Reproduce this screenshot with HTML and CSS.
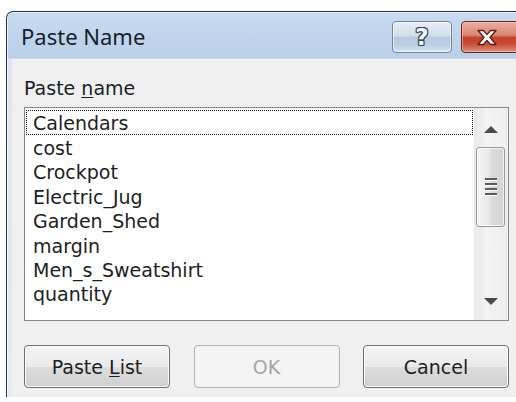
FILE: index.html
```html
<!DOCTYPE html>
<html lang="en">
<head>
<meta charset="utf-8">
<title>Paste Name</title>
<link rel="stylesheet" href="styles.css">
</head>
<body>
<div class="window">
  <div class="titlebar">
    <span class="title">Paste Name</span>
    <div class="caption-buttons">
      <div class="cap help"><span class="help-glyph">?</span></div>
      <div class="cap close">
        <svg class="close-glyph" width="22" height="17" viewBox="0 0 22 17">
          <path d="M2 1.5 H7.5 L11 5.6 L14.5 1.5 H20 L14 8.5 L20 15.5 H14.5 L11 11.4 L7.5 15.5 H2 L8 8.5 Z" fill="#ffffff" stroke="#5e1d14" stroke-width="1.3" stroke-linejoin="round"/>
        </svg>
      </div>
    </div>
  </div>
  <div class="client">
    <div class="field-label">Paste <u>n</u>ame</div>
    <div class="listbox">
      <ul class="items">
        <li class="item focused">Calendars</li>
        <li class="item">cost</li>
        <li class="item">Crockpot</li>
        <li class="item">Electric_Jug</li>
        <li class="item">Garden_Shed</li>
        <li class="item">margin</li>
        <li class="item">Men_s_Sweatshirt</li>
        <li class="item">quantity</li>
      </ul>
      <div class="scrollbar">
        <div class="sb-btn sb-up">
          <svg width="14" height="7" viewBox="0 0 14 7"><path d="M0 7 L7 0 L14 7 Z" fill="#4a4a4a"/></svg>
        </div>
        <div class="sb-track">
          <div class="thumb">
            <span class="grip"></span><span class="grip"></span><span class="grip"></span><span class="grip"></span>
          </div>
        </div>
        <div class="sb-btn sb-down">
          <svg width="14" height="7" viewBox="0 0 14 7"><path d="M0 0 L14 0 L7 7 Z" fill="#4a4a4a"/></svg>
        </div>
      </div>
    </div>
    <div class="buttons">
      <div class="btn"><span>Paste <u>L</u>ist</span></div>
      <div class="btn disabled"><span>OK</span></div>
      <div class="btn"><span>Cancel</span></div>
    </div>
  </div>
</div>
</body>
</html>
```
FILE: styles.css
```css
html, body {
  margin: 0;
  padding: 0;
}

body {
  width: 516px;
  height: 402px;
  overflow: hidden;
  background: #ffffff;
  font-family: "DejaVu Sans", Tahoma, sans-serif;
}

/* dialog frame */
.window {
  margin: 11px 0 0 6px;
  width: 538px;
  border: 1px solid #2f343c;
  border-bottom: none;
  border-radius: 7px 7px 0 0;
  background: linear-gradient(to bottom, #c8dbef 0, #b9d0e9 46px, #dbe6f2 47px, #e4ecf5 100%);
  box-shadow: inset 0 1px 0 rgba(255, 255, 255, 0.6), inset 1px 0 0 rgba(255, 255, 255, 0.6);
}

.titlebar {
  height: 47px;
  display: flex;
  align-items: flex-start;
  padding: 0 14px 0 14px;
}

.title {
  font-family: "Noto Sans", "Open Sans", sans-serif;
  font-size: 22px;
  line-height: 49px;
  color: #17202e;
}

.caption-buttons {
  margin-left: auto;
  margin-top: 9px;
  display: flex;
  gap: 9px;
}

.cap {
  height: 32px;
  box-sizing: border-box;
  border-radius: 4px;
  display: flex;
  align-items: center;
}

.help {
  width: 60px;
  justify-content: center;
  border: 1px solid #75879e;
  background: linear-gradient(to bottom, #e6eef7 0%, #d2deec 45%, #b6c9de 52%, #bccfe4 78%, #d9e6f3 100%);
  box-shadow: inset 0 0 0 1px rgba(255, 255, 255, 0.55);
}

.help-glyph {
  font-family: "DejaVu Sans", sans-serif;
  font-weight: bold;
  font-size: 23px;
  line-height: 1;
  color: #f4f6f9;
  text-shadow:
    1px 0 #34455c, -1px 0 #34455c, 0 1px #34455c, 0 -1px #34455c,
    1px 1px #34455c, -1px -1px #34455c, 1px -1px #34455c, -1px 1px #34455c;
}

.close {
  width: 70px;
  padding-left: 14px;
  border: 1px solid #6b251c;
  background: linear-gradient(to bottom, #eab0a3 0%, #d98572 44%, #c2412a 52%, #c74b33 72%, #e0927f 100%);
  box-shadow: inset 0 0 0 1px rgba(255, 220, 210, 0.45);
}

.close-glyph {
  display: block;
}

/* client area */
.client {
  margin: 0 5px 0 5px;
  height: 338px;
  box-sizing: border-box;
  padding: 18px 0 0 12px;
  background: #f0f0f0;
  color: #1c1e24;
  font-size: 19px;
}

.field-label {
  line-height: 22px;
  margin-bottom: 8px;
}

u {
  text-underline-offset: 2px;
}

.listbox {
  width: 485px;
  height: 214px;
  box-sizing: border-box;
  border: 1px solid #828790;
  background: #ffffff;
  display: flex;
}

.items {
  flex: 1;
  list-style: none;
  margin: 0;
  padding: 2px 1px 0 1px;
  overflow: hidden;
}

.item {
  height: 24.4px;
  box-sizing: border-box;
  border: 1px dotted transparent;
  padding: 1px 0 0 6px;
  line-height: 22px;
  white-space: nowrap;
}

.item.focused {
  height: 25px;
  border-color: #1a1a1a;
}

/* vertical scrollbar */
.scrollbar {
  width: 34px;
  display: flex;
  flex-direction: column;
  background: linear-gradient(to right, #e9e9e9, #f3f3f3 40%, #eeeeee);
}

.sb-btn {
  display: flex;
  justify-content: center;
  align-items: flex-start;
}

.sb-up {
  height: 39px;
  padding-top: 18px;
  box-sizing: border-box;
}

.sb-down {
  height: 34px;
  padding-top: 12px;
  box-sizing: border-box;
}

.sb-btn svg {
  display: block;
}

.sb-track {
  flex: 1;
  padding: 0 3px 0 2px;
}

.thumb {
  height: 80px;
  box-sizing: border-box;
  border: 1px solid #9a9a9a;
  border-radius: 3px;
  background: linear-gradient(to right, #f6f6f6 0%, #e9e9e9 45%, #dadada 55%, #d4d4d4 100%);
  box-shadow: inset 0 0 0 1px rgba(255, 255, 255, 0.7);
  display: flex;
  flex-direction: column;
  align-items: center;
  justify-content: center;
  gap: 2px;
}

.grip {
  width: 12px;
  height: 2px;
  background: #5c5c5c;
  border-bottom: 1px solid #ffffff;
}

/* command buttons */
.buttons {
  width: 485px;
  margin-top: 24px;
  display: flex;
  justify-content: space-between;
}

.btn {
  width: 146px;
  height: 43px;
  box-sizing: border-box;
  border: 1px solid #707070;
  border-radius: 4px;
  background: linear-gradient(to bottom, #f3f3f3 0%, #ebebeb 50%, #dddddd 51%, #cfcfcf 100%);
  box-shadow: inset 0 0 0 1px #fbfbfb;
  display: flex;
  align-items: center;
  justify-content: center;
  color: #1c1e24;
}

.btn.disabled {
  border-color: #adb2b5;
  background: #f4f4f4;
  box-shadow: none;
  color: #a4a4a4;
}
```
